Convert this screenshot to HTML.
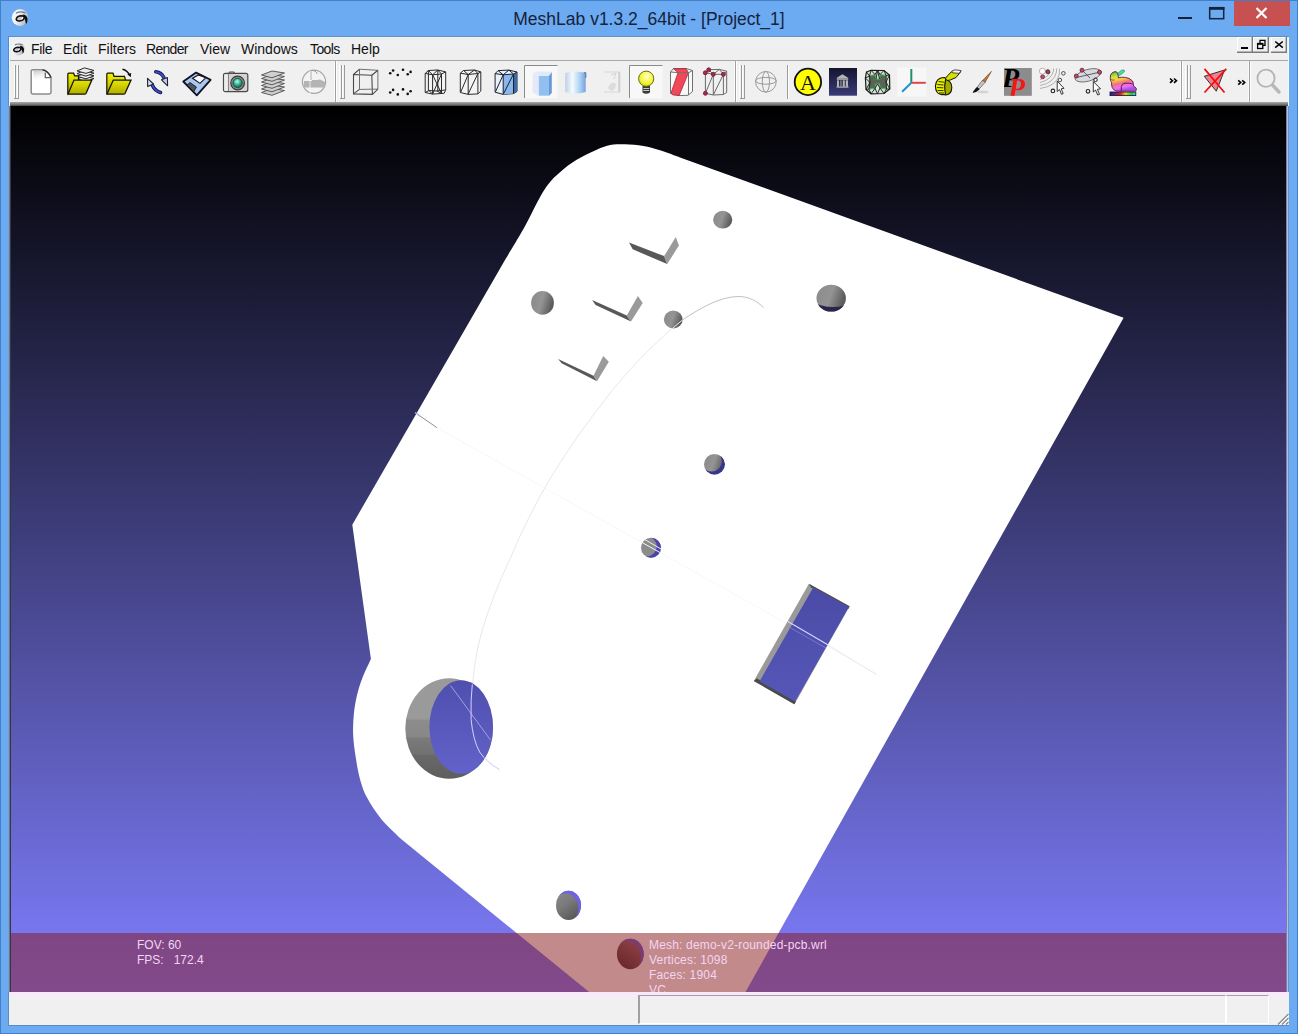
<!DOCTYPE html>
<html><head><meta charset="utf-8">
<style>
*{margin:0;padding:0;box-sizing:border-box}
html,body{width:1298px;height:1034px;overflow:hidden}
body{position:relative;background:#6aa8ef;font-family:"Liberation Sans",sans-serif}
.a{position:absolute}
#frame{left:0;top:0;width:1298px;height:1034px;border:1px solid #4080c8;background:#6caaf2}
#title{left:0;top:9px;width:1298px;text-align:center;font-size:17.5px;color:#15233a;letter-spacing:0px}
#client{left:8px;top:36px;width:1281px;height:990px;background:#f0f0f0;border-top:1px solid #6090c0;border-left:1px solid #5a8ac8;border-bottom:1px solid #5a8ac8}
#menubar{left:9px;top:37px;width:1280px;height:23px;background:linear-gradient(#e8f6fb 0,#eeece6 2px,#f0f0f2 3px,#efefef 100%)}
#menusep{left:9px;top:60px;width:1280px;height:1px;background:#a8a8a8}
#menusep2{left:9px;top:61px;width:1280px;height:1px;background:#fff}
.menu{top:41px;font-size:14px;color:#111}
#tbbot{left:9px;top:102px;width:1280px;height:4px;background:linear-gradient(#a8a8a8,#787878 60%,#404040)}
#canvas{left:11px;top:106px;width:1275px;height:886px;background:linear-gradient(#000 0%,rgb(128,127,255) 100%);overflow:hidden}
#status{left:9px;top:992px;width:1280px;height:33px;background:#f0f0f0}
.vsep{top:61px;width:1px;height:41px;background:#a0a0a0;box-shadow:1px 0 0 #fff,-1px 0 0 #fafafa}
.handle{top:65px;width:6px;height:34px;border-left:1px solid #fff;}
.handle:before{content:"";position:absolute;left:1px;top:0;width:1px;height:33px;background:#9a9a9a}
.handle:after{content:"";position:absolute;left:2px;top:0;width:3px;height:33px;border-left:1px solid #fff;border-right:1px solid #9a9a9a;border-bottom:1px solid #9a9a9a}
.ico{position:absolute;overflow:visible}
.ovt{font-size:12px;color:#f4d4f4;line-height:15px;white-space:pre}
</style></head><body>
<div id="frame" class="a"></div>
<div id="title" class="a">MeshLab v1.3.2_64bit - [Project_1]</div>
<!-- window buttons -->
<div class="a" style="left:1178px;top:17px;width:14px;height:2px;background:#15233a"></div>
<svg class="a" style="left:1205px;top:4px" width="24" height="20" viewBox="1205 4 24 20"><rect x="1209.7" y="7.7" width="14" height="11" fill="none" stroke="#15233a" stroke-width="1.5"/><rect x="1209" y="7" width="15.4" height="2.8" fill="#15233a"/></svg>
<div class="a" style="left:1234px;top:1px;width:56px;height:25px;background:#c75050"></div>
<svg class="a" style="left:1255px;top:7px" width="13" height="12"><path d="M1.5 1 L11.5 11 M11.5 1 L1.5 11" stroke="#fff" stroke-width="2.2"/></svg>

<div id="client" class="a"></div>
<div id="menubar" class="a"></div>
<div id="menusep" class="a"></div>
<div id="menusep2" class="a"></div>
<div class="a menu" style="left:31px;letter-spacing:-0.3px">File</div>
<div class="a menu" style="left:63px">Edit</div>
<div class="a menu" style="left:98px">Filters</div>
<div class="a menu" style="left:146px;letter-spacing:-0.7px">Render</div>
<div class="a menu" style="left:200px">View</div>
<div class="a menu" style="left:241px">Windows</div>
<div class="a menu" style="left:310px;letter-spacing:-0.6px">Tools</div>
<div class="a menu" style="left:351px">Help</div>


<!-- toolbar separators & handles -->
<div class="a" style="left:9px;top:61px;width:1280px;height:41px;background:#f0f0f0"></div>
<div class="a vsep" style="left:335px"></div>
<div class="a vsep" style="left:735px"></div>
<div class="a vsep" style="left:1181px"></div>
<div class="a vsep" style="left:1249px"></div>
<svg class="a" style="left:0;top:0" width="1298" height="110" viewBox="0 0 1298 110">
<defs>
 <linearGradient id="gFold" x1="0" y1="0" x2="1" y2="1"><stop offset="0" stop-color="#fff"/><stop offset="0.45" stop-color="#d8d8d8"/><stop offset="1" stop-color="#fff"/></linearGradient>
 <linearGradient id="gYel" x1="0" y1="0" x2="0" y2="1"><stop offset="0" stop-color="#f4f400"/><stop offset="1" stop-color="#a8a400"/></linearGradient>
 <linearGradient id="gYel2" x1="0" y1="0" x2="0" y2="1"><stop offset="0" stop-color="#e6e600"/><stop offset="1" stop-color="#b0ac00"/></linearGradient>
 <linearGradient id="gNavy" x1="0" y1="0" x2="0" y2="1"><stop offset="0" stop-color="#151530"/><stop offset="1" stop-color="#3a3a78"/></linearGradient>
 <linearGradient id="gCyl" x1="0" y1="0" x2="1" y2="0"><stop offset="0" stop-color="#b8cce8"/><stop offset="0.35" stop-color="#f4fcff"/><stop offset="0.7" stop-color="#a8d0f8"/><stop offset="1" stop-color="#6898d8"/></linearGradient>
 <linearGradient id="gRain" x1="0" y1="0" x2="1" y2="0"><stop offset="0" stop-color="#2020a0"/><stop offset="0.4" stop-color="#d02020"/><stop offset="0.6" stop-color="#e0d020"/><stop offset="0.85" stop-color="#20c040"/><stop offset="1" stop-color="#40e0c0"/></linearGradient>
 <linearGradient id="gBun" x1="0" y1="0" x2="0.3" y2="1"><stop offset="0" stop-color="#30c030"/><stop offset="0.3" stop-color="#d8e040"/><stop offset="0.45" stop-color="#f8d040"/><stop offset="0.65" stop-color="#f07080"/><stop offset="0.85" stop-color="#f070f0"/><stop offset="1" stop-color="#b050e8"/></linearGradient>
 <radialGradient id="gLens" cx="0.45" cy="0.35" r="0.7"><stop offset="0" stop-color="#b0fff0"/><stop offset="0.6" stop-color="#20a080"/><stop offset="1" stop-color="#106050"/></radialGradient>
 <radialGradient id="gBulb" cx="0.55" cy="0.35" r="0.7"><stop offset="0" stop-color="#ffffd0"/><stop offset="0.5" stop-color="#f8f850"/><stop offset="1" stop-color="#e0e000"/></radialGradient>
</defs>
<!-- handles -->
<g stroke-width="1" fill="none">
 <path d="M14.5 65 V98.5 M17.5 65 V98.5" stroke="#fff"/><path d="M15.5 65 V98.5 M18.5 65 V98.5 M14 98.5 H19" stroke="#9a9a9a"/>
 <path d="M339.5 65 V98.5 M342.5 65 V98.5" stroke="#fff"/><path d="M341.5 65 V98.5 M344.5 65 V98.5 M340 98.5 H345" stroke="#9a9a9a"/>
 <path d="M739.5 65 V98.5 M742.5 65 V98.5" stroke="#fff"/><path d="M741.5 65 V98.5 M744.5 65 V98.5 M740 98.5 H745" stroke="#9a9a9a"/>
 <path d="M1185.5 65 V98.5 M1188.5 65 V98.5" stroke="#fff"/><path d="M1187.5 65 V98.5 M1190.5 65 V98.5 M1186 98.5 H1191" stroke="#9a9a9a"/>
 <path d="M787.5 65 V99" stroke="#9a9a9a"/><path d="M788.5 65 V99" stroke="#fff"/>
</g>
<!-- 1 new doc -->
<path d="M31.2 71.5 Q31.2 69.8 33 69.8 H42.5 Q48 70.5 51 77.5 V92.2 Q51 93.9 49.3 93.9 H33 Q31.2 93.9 31.2 92.2 Z" fill="#fff" stroke="#8c8c8c" stroke-width="1.5"/>
<path d="M32.5 71 H42 Q44 71 45 73 V77.5 H50" fill="none" stroke="none"/>
<linearGradient id="gDocSh" x1="0" y1="0" x2="0.3" y2="1"><stop offset="0" stop-color="#b8b8b8"/><stop offset="1" stop-color="#fff" stop-opacity="0"/></linearGradient><path d="M33.5 70.8 H42.5 Q44.5 71.5 45.3 73 V78 H50 L50.3 80 L33.5 82 Z" fill="url(#gDocSh)" opacity="0.8"/>
<path d="M42.5 69.8 Q48 70.5 51 77.5" fill="none" stroke="#303030" stroke-width="1.3"/>
<path d="M45.3 72.5 V77.6 H50.5" fill="none" stroke="#606060" stroke-width="1.2"/>
<!-- 2 open project: layers + folder -->
<g stroke="#2a2a2a" stroke-width="1" fill="#ececec" stroke-linejoin="round">
 <path d="M77 79 L84.5 76 L94 78.6 L86 81.5 Z"/>
 <path d="M77 76.3 L84.5 73.3 L94 75.9 L86 78.8 Z"/>
 <path d="M77 73.6 L84.5 70.6 L94 73.2 L86 76.1 Z"/>
 <path d="M77 70.9 L84.5 67.9 L94 70.5 L86 73.4 Z"/>
</g>
<path d="M67.8 74.2 Q67.8 73.2 68.8 73.2 H73.6 L74.6 75.8 H78.5 V80 L68 94 Q67.8 93 67.8 92Z" fill="url(#gYel)" stroke="#151500" stroke-width="1.2"/>
<path d="M74 80.1 H91.8 L86 93.5 Q85.6 94.2 84.5 94.2 H68.5 Q67.8 94.2 68.2 93.4Z" fill="url(#gYel2)" stroke="#151500" stroke-width="1.3"/>
<!-- 3 open mesh -->
<path d="M106.8 74.2 Q106.8 73.2 107.8 73.2 H113 L114 76.3 H124.5 L125.5 80 L107 94 Q106.8 93 106.8 92Z" fill="url(#gYel)" stroke="#151500" stroke-width="1.2"/>
<path d="M113.3 80.1 H131 L125 93.5 Q124.6 94.2 123.5 94.2 H107.5 Q106.8 94.2 107.2 93.4Z" fill="url(#gYel2)" stroke="#151500" stroke-width="1.3"/>
<path d="M122.5 69.3 Q127.5 70.5 129.5 75" fill="none" stroke="#101010" stroke-width="1.4"/>
<path d="M127.3 74.3 L130.8 77.2 L131.2 73 Z" fill="#101010"/>
<!-- 4 reload -->
<path d="M155.8 71.8 Q161.5 72.5 163.8 77.5" fill="none" stroke="#101850" stroke-width="3.6" stroke-linecap="round"/>
<path d="M155.8 71.8 Q161.5 72.5 163.8 77.5" fill="none" stroke="#3a50d0" stroke-width="1.8" stroke-linecap="round"/>
<path d="M161.5 79.8 L167.4 77.6 L167.6 85.8 Z" fill="#c8c8f4" stroke="#202030" stroke-width="1.1" stroke-linejoin="round"/>
<path d="M152.5 85.5 Q155 91 160.5 92.5" fill="none" stroke="#101850" stroke-width="3.6" stroke-linecap="round"/>
<path d="M152.5 85.5 Q155 91 160.5 92.5" fill="none" stroke="#3a50d0" stroke-width="1.8" stroke-linecap="round"/>
<path d="M147.5 78.3 L153.5 84 L147.7 86.6 Z" fill="#d0e0f0" stroke="#202030" stroke-width="1.1" stroke-linejoin="round"/>
<!-- 5 floppy -->
<path d="M196.1 72.6 L210.6 79.8 L196.8 95.3 L183.3 81.5 Z" fill="#a8c8f0" stroke="#101020" stroke-width="1.8" stroke-linejoin="round"/>
<path d="M198.4 74.9 L205.7 77.8 L200 83.4 L192.5 78.2 Z" fill="#f8f8f8" stroke="#101020" stroke-width="1.1"/>
<path d="M189.9 82.4 L196.4 87 L193.8 91.8 L187 85 Z" fill="#505058" stroke="#101020" stroke-width="0.8"/>
<!-- 6 camera -->
<path d="M229.2 73.3 V72 H234.2 V73.3" fill="#d8d8d8" stroke="#505050" stroke-width="1"/>
<rect x="223.5" y="73.3" width="24.3" height="18.3" rx="2" fill="#d4d4d4" stroke="#4a4a4a" stroke-width="1.2"/>
<path d="M228.3 73.8 V91" stroke="#707070" stroke-width="1"/>
<rect x="224.3" y="74.5" width="3.6" height="16.4" fill="#ececec"/>
<circle cx="237.6" cy="83" r="6.8" fill="#8a8a8a" stroke="#3a3a3a" stroke-width="1.2"/>
<circle cx="237.6" cy="83" r="4.6" fill="url(#gLens)" stroke="#104838" stroke-width="0.8"/>
<!-- 7 layers -->
<g stroke="#5a5a5a" stroke-width="1" fill="#cfcfcf">
 <path d="M261.5 92.5 L272 88.5 L284.5 90.5 L272 95.3 Z"/>
 <path d="M261.5 89 L272 85 L284.5 87 L272 91.8 Z"/>
 <path d="M261.5 85.5 L272 81.5 L284.5 83.5 L272 88.3 Z"/>
 <path d="M261.5 82 L272 78 L284.5 80 L272 84.8 Z"/>
 <path d="M261.5 78.5 L272 74.5 L284.5 76.5 L272 81.3 Z"/>
 <path d="M261.5 75 L272 71 L284.5 73 L272 77.8 Z"/>
</g>
<!-- 8 globe faded -->
<g opacity="0.75">
<circle cx="314" cy="81.8" r="11.6" fill="#f4f4f4" stroke="#8c8c8c" stroke-width="1.2"/>
<path d="M304 81 H312 V80 H317 L320 79.5 L325 82 V87.5 H303.5Z" fill="#a0a0a0"/>
<path d="M310.5 71 Q313 70 315 71 Q317.5 73 317 74" fill="none" stroke="#808080" stroke-width="1"/>
<path d="M310 71 V95" stroke="#fff" stroke-width="1" opacity="0.8"/>
<path d="M311 72 V80" stroke="#999" stroke-width="1"/>
</g>
<!-- 9 bbox cube -->
<g fill="none" stroke="#4a4a4a" stroke-width="1.1">
 <path d="M353.5 74.5 L371.8 75.3 L372.4 94.4 L353.5 93.9 Z"/>
 <path d="M359.5 69.2 L377.9 70.3 L377.9 89.1 L359.5 89.4 Z" stroke="#707070" stroke-width="1"/>
 <path d="M353.5 74.5 L359.5 69.2 M371.8 75.3 L377.9 70.3 M372.4 94.4 L377.9 89.1 M353.5 93.9 L359.5 89.4"/>
</g>
<!-- 10 points -->
<g fill="#111">
 <circle cx="390.2" cy="73.2" r="1.3"/><circle cx="393.1" cy="70.5" r="1.3"/><circle cx="397.8" cy="75" r="1.3"/><circle cx="403" cy="69.8" r="1.3"/><circle cx="407.7" cy="74.2" r="1.3"/><circle cx="410.6" cy="71.9" r="1.3"/>
 <circle cx="390.2" cy="92.5" r="1.3"/><circle cx="393.1" cy="89.9" r="1.3"/><circle cx="397.8" cy="94.4" r="1.3"/><circle cx="403" cy="89.4" r="1.3"/><circle cx="407.7" cy="93.9" r="1.3"/><circle cx="410.6" cy="91.2" r="1.3"/>
</g>
<!-- 11 wireframe prism -->
<g fill="#f4f4f4" stroke="#2a2a2a" stroke-width="1">
 <path d="M425.2 73.4 L428.4 70.5 L437.8 70 L445.7 71.9 V90.2 L444.1 93.3 L432.6 94.1 L425.2 92.5 Z"/>
 <path d="M425.2 73.4 L432.6 74.8 L441.5 74 L445.7 71.9 M432.6 74.8 V94.1 M441.5 74 V93.5 M428.4 70.5 L432.6 74.8 L437.8 70 L441.5 74 M432.6 74.8 L441.5 93.5 M441.5 74 L432.6 94.1 M429 90.5 L437 91 L445 90 M425.2 92.5 L429 90.5 L432.6 94.1 M437 91 L441.5 93.5 M428.4 70.5 V90.5 M437.8 70 V91" fill="none"/>
</g>
<!-- 12 flat lines prism -->
<g fill="#f4f4f4" stroke="#2a2a2a" stroke-width="1">
 <path d="M460.3 73.2 L463.5 70.5 L474.5 70 L480.8 71.9 V91 L477.9 93.9 L468.2 94.4 L460.3 92.5 Z"/>
 <path d="M460.3 73.2 L468.2 74.5 L477.9 73.5 L480.8 71.9 M468.2 74.5 V94.4 M477.9 73.5 V93.9 M463.5 70.5 L468.2 74.5 L474.5 70 L477.9 73.5 M468.2 74.5 L460.8 92 M477.9 73.5 L468.2 94" fill="none"/>
</g>
<!-- 13 flat+lines blue -->
<path d="M495.1 73.6 L498.1 70.6 L508.9 70.1 L517 72 V91.4 L513.5 93.6 L503.2 94.4 L495.1 92.2 Z" fill="#e8f0f8" stroke="#1a2030" stroke-width="1"/>
<path d="M503.2 74.8 L513.5 74 V93.6 L503.2 94.4 Z" fill="#88b8ec"/>
<path d="M513.5 74 L517 72 V91.4 L513.5 93.6 Z" fill="#3a6aa8"/>
<path d="M495.1 73.6 L503.2 74.8 L513.5 74 L517 72 M503.2 74.8 V94.4 M513.5 74 V93.6 M498.1 70.6 L503.2 74.8 L508.9 70.1 L513.5 74 M503.2 74.8 L495.6 91.5 M513.5 74 L503.5 93.8" fill="none" stroke="#1a2030" stroke-width="1"/>
<!-- pressed buttons -->
<g>
 <path d="M524.5 98 V65.5 H557.5" fill="none" stroke="#8a8a8a" stroke-width="1"/>
 <rect x="525" y="66" width="32.5" height="32" fill="#f8f8f8"/>
 <path d="M629.5 98 V65.5 H662.5" fill="none" stroke="#8a8a8a" stroke-width="1"/>
 <rect x="630" y="66" width="32.5" height="32" fill="#f8f8f8"/>
</g>
<!-- 14 flat box -->
<path d="M532.6 73 L538.8 76 V95.7 L532.6 92.5 Z" fill="#e0e4f8" opacity="0.8"/>
<path d="M533 72 L540 71.5 L551.8 71.7 L549 76 L538.8 76Z" fill="#d8e8f8" opacity="0.8"/>
<path d="M538.8 76 H549 V95.7 H538.8 Z" fill="#90c0f0"/>
<path d="M549 76 L551.8 72 V93 L549 95.7 Z" fill="#6898d8"/>
<!-- 15 smooth cylinder -->
<path d="M565.2 73 Q575 70 585.7 73 V92 Q575 95 565.2 92 Z" fill="url(#gCyl)" opacity="0.9"/>
<path d="M583.8 72.5 L585.7 73 V78" fill="none" stroke="#5a7aa0" stroke-width="1.2"/>
<!-- 16 texture faded -->
<g opacity="0.35">
 <path d="M604 72 H620 V92 H604" fill="none" stroke="#b0b0b0" stroke-width="1"/>
 <path d="M619 72 V92" stroke="#909090" stroke-width="1.5"/>
 <path d="M608 88 Q611 80 616 84 Q616 90 611 91 Z" fill="#b8b8b8"/>
 <path d="M611 75 L616 73 L614 79" fill="none" stroke="#a0a0a0"/>
</g>
<!-- 17 bulb -->
<path d="M642.5 86 H650 V92.5 Q646.2 95 642.5 92.5 Z" fill="#3a3a3a"/>
<path d="M643.3 88.5 H649.2 M643.3 90.5 H649.2" stroke="#c8c8c8" stroke-width="1"/>
<circle cx="646.2" cy="78.7" r="7.6" fill="url(#gBulb)" stroke="#6a6a10" stroke-width="1"/>
<!-- 18 red face prism -->
<path d="M670.5 72 L673.5 68.5 L686 68.5 L692.5 70.5 V91.5 L688 95.3 L679 95.6 L670.5 93.5 Z" fill="#f8f8f8" stroke="#707070" stroke-width="1"/>
<path d="M673.5 68.8 L686 68.6 L688.5 72.8 L679.2 95.4 L673 95 L671 93 L678 72.6 Z" fill="#f04858" stroke="#a02030" stroke-width="0.7"/>
<path d="M670.5 72 L678 72.6 L688.5 72.8 L692.5 70.5 M688.5 72.8 V95" fill="none" stroke="#707070" stroke-width="1"/>
<!-- 19 vertex prism -->
<g fill="none" stroke="#6a6a6a" stroke-width="1">
 <path d="M705.4 72.8 V93.3 L713.3 95 L723.4 94.5 L726.7 92.5 V71.2 L719.3 69.4 L708.7 69.7 Z"/>
 <path d="M705.4 72.8 L713.3 74.3 L723.4 74.3 L726.7 71.2 M713.3 74.3 V95 M723.4 74.3 V94.5 M713.3 74.3 L705.4 93.3 M723.4 74.3 L713.3 95 M708.7 69.7 L713.3 74.3 L719.3 69.4 L723.4 74.3"/>
</g>
<g fill="#a82848" stroke="#701830" stroke-width="0.8">
 <circle cx="708.7" cy="69.8" r="2"/><circle cx="705.3" cy="72.8" r="2"/><circle cx="713.3" cy="74.3" r="2"/><circle cx="723.4" cy="74.3" r="2"/><circle cx="705.4" cy="93.3" r="2"/>
</g>
<!-- 20 globe wire -->
<g fill="none" stroke="#9a9a9a" stroke-width="1">
 <circle cx="765.9" cy="81.8" r="10.3"/>
 <ellipse cx="765.9" cy="80.8" rx="10.3" ry="3.4"/>
 <ellipse cx="765.9" cy="81.8" rx="3.6" ry="10.3"/>
</g>
<!-- 21 A circle -->
<circle cx="807.9" cy="81.9" r="13.2" fill="#ffff00" stroke="#111" stroke-width="1.8"/>
<text x="808" y="89.8" font-family="Liberation Serif" font-size="22" text-anchor="middle" fill="#111">A</text>
<!-- 22 dark image -->
<rect x="829" y="68" width="28" height="27.7" fill="url(#gNavy)"/>
<g fill="#b4b4b4">
 <path d="M836.5 78 L842.4 74.2 L848.4 78 Z"/>
 <rect x="836.8" y="78.2" width="11.4" height="1.6"/>
 <rect x="837" y="80.3" width="2" height="6.5"/><rect x="840" y="80.3" width="1.8" height="6.5" fill="#707070"/><rect x="842.8" y="80.3" width="2" height="6.5"/><rect x="845.8" y="80.3" width="2.2" height="6.5"/>
 <rect x="836.5" y="86.5" width="12" height="1.2"/>
</g>
<!-- 23 mesh icon -->
<path d="M866.5 72 L871 70.3 L884 70.5 L889.5 75 L889.8 89 L884 93.5 L871 93.8 L866 89.5 L865.4 78Z" fill="#d8e0d8" stroke="#1a1a1a" stroke-width="1.2"/>
<path d="M869.5 76 L875 74.5 L876 79 L879.5 79 L880 74.5 L886 75.5 L886.5 89 L880 88 L879.5 84 L876 84 L875 88.5 L869 89 Z" fill="#5a625a" stroke="#40c050" stroke-width="1.1"/>
<path d="M871 70.3 L869.5 76 L866.5 72 M871 70.3 L875 74.5 L877.5 70.4 L880 74.5 L884 70.5 L886 75.5 L889.5 75 M865.4 78 L869.5 76 M865.4 78 L870 82.5 L866 89.5 M870 82.5 L869 89 L871 93.8 L875 88.5 L877.5 93.7 L880 88 L884 93.5 L886.5 89 L889.8 89 M889.5 75 L886 82 L889.8 89 M866 89.5 L869 89 M869.5 76 L870 82.5 M886.5 89 L886 82 L886 75.5 M877.5 70.4 L876 79 M877.5 70.4 L879.5 79 M875 88.5 L877.5 84 L880 88" fill="none" stroke="#1a1a1a" stroke-width="0.9"/>
<!-- 24 axes -->
<rect x="897.2" y="67.4" width="29.2" height="29" fill="#fafafa" opacity="0.7"/>
<path d="M911.3 69 V82.8" stroke="#209070" stroke-width="2"/>
<path d="M911.3 82.8 H925.8" stroke="#e04848" stroke-width="2"/>
<path d="M911.3 82.8 L902.1 91.7" stroke="#2090d0" stroke-width="2"/>
<!-- 25 tape -->
<path d="M944.5 79.5 Q947 76 951.4 71.8 L960.8 71.6 L956 77.5 Q950 80.5 946 81 Z" fill="#d8e000" stroke="#141400" stroke-width="1"/>
<path d="M951.8 71 L955 69.8 L961.2 70.6 L959 73.4 L952.5 72.8 Z" fill="#f4f4f4" stroke="#404040" stroke-width="0.9"/>
<path d="M945.5 79.5 Q951.8 81 951.8 87.5 Q951.6 94.5 946 95 Q944 95 943 94 Z" fill="#a4ac00" stroke="#141400" stroke-width="1.1"/>
<path d="M944.6 77.5 Q936 77.5 935.4 86 Q935.6 93.5 941 94.5 Q944 95 945.5 94 Q943.8 86 945.8 79 Z" fill="#e6f000" stroke="#141400" stroke-width="1.1"/>
<path d="M938.5 81.5 L944 82.2 M937.3 84.5 L943.6 85 M937 87.5 L943.4 87.8 M937.6 90.5 L943.6 90.6 M939 93 L944 93" stroke="#202000" stroke-width="0.9"/>
<!-- 26 brush -->
<ellipse cx="983" cy="92" rx="6" ry="1.4" fill="#c0c0c0" opacity="0.6"/>
<path d="M991.4 71.4 L985 82.5 L982 81 Z" fill="#c07830" stroke="#6a4010" stroke-width="0.6"/>
<path d="M985.5 82 L979 89 L977 87.5 L982.2 80.6 Z" fill="#c8c8c8" stroke="#404040" stroke-width="0.6"/>
<path d="M977 87 Q979 88 979.6 89.6 Q976 93 972.5 92.6 Q974.5 89 977 87Z" fill="#111"/>
<!-- 27 PP -->
<rect x="1004" y="68" width="27.8" height="27.8" fill="#8c8c8c"/>
<clipPath id="cPP"><rect x="1004" y="68" width="27.8" height="27.8"/></clipPath>
<g clip-path="url(#cPP)">
<text x="1002" y="86.8" font-family="Liberation Serif" font-style="italic" font-weight="bold" font-size="28" fill="#000">P</text>
<text x="1008.5" y="96.5" font-family="Liberation Serif" font-style="italic" font-weight="bold" font-size="27" fill="#f01818">P</text>
</g>
<!-- 28 point picking -->
<g fill="none" stroke="#a8a8a8" stroke-width="0.9">
 <path d="M1059.4 68.5 V74 Q1057 86 1040 88.5"/>
 <path d="M1056.5 68.5 V72 Q1054 83 1040 85.5"/>
 <path d="M1053.5 68.5 V71 Q1051 80 1040 82.5"/>
 <path d="M1050.5 72 Q1048 77 1040 79.5"/>
</g>
<circle cx="1042.4" cy="71.2" r="3" fill="#fff" stroke="#a0a0a0" stroke-width="0.8"/>
<circle cx="1047.8" cy="71.7" r="2" fill="#a04050" stroke="#402020" stroke-width="0.8"/>
<circle cx="1042.6" cy="76.8" r="2" fill="#c84868" stroke="#602030" stroke-width="0.6"/>
<circle cx="1063.4" cy="73.3" r="1.8" fill="none" stroke="#404040" stroke-width="0.9"/>
<circle cx="1059.9" cy="80" r="1.8" fill="none" stroke="#404040" stroke-width="0.9"/>
<circle cx="1052.9" cy="90.9" r="1.8" fill="none" stroke="#202020" stroke-width="1.1"/>
<path d="M1057.2 81 V91.5 L1059.5 89.5 L1061.5 94.3 L1063.2 93.6 L1061.2 88.8 L1064 88.3 Z" fill="#fff" stroke="#202020" stroke-width="0.9" stroke-linejoin="round"/>
<!-- 29 ellipse picking -->
<ellipse cx="1088" cy="75.3" rx="13.5" ry="5.8" transform="rotate(-16 1088 75.3)" fill="#d8d8e0" stroke="#707070" stroke-width="0.9"/>
<path d="M1076.5 77.5 L1099.5 72.2 M1082 70.2 L1090 78" stroke="#404040" stroke-width="0.8"/>
<circle cx="1082" cy="70.2" r="2" fill="#c04868" stroke="#602030" stroke-width="0.8"/>
<circle cx="1076.3" cy="76" r="2" fill="#c04868" stroke="#602030" stroke-width="0.8"/>
<circle cx="1099.5" cy="72.2" r="2" fill="#c04868" stroke="#602030" stroke-width="0.8"/>
<circle cx="1095.5" cy="79.8" r="1.8" fill="none" stroke="#202020" stroke-width="1"/>
<circle cx="1088" cy="91.3" r="1.8" fill="none" stroke="#202020" stroke-width="1.1"/>
<path d="M1093.3 81.5 V92 L1095.5 90 L1097.7 95 L1099.5 94.3 L1097.4 89.3 L1100.5 88.8 Z" fill="#fff" stroke="#202020" stroke-width="0.9" stroke-linejoin="round"/>
<!-- 30 bunny -->
<rect x="1110" y="92" width="25.8" height="3.6" fill="url(#gRain)" stroke="#101040" stroke-width="0.8"/>
<path d="M1117 74.5 Q1119 71.5 1122 70 Q1124.5 69.5 1124.8 71 Q1123.5 73 1119.5 75.5 Z" fill="#40e0a0" stroke="#208050" stroke-width="0.6"/>
<path d="M1110.5 75 Q1112 72 1115 71.6 Q1117.5 71.5 1118 74.5 L1118.3 77.8 Q1121 77 1124.2 77.3 Q1129.7 77.6 1132.5 81 Q1133.8 83.5 1133.5 86 Q1135.5 87 1136.3 88.5 Q1136.4 90.5 1135.5 91.2 L1116.5 91.2 Q1113 90 1112.2 87.5 Q1111.2 84.5 1111.6 82.4 Q1110.2 80.5 1110.3 78.5 Z" fill="url(#gBun)" stroke="#5a1a4a" stroke-width="0.9"/>
<path d="M1121.3 91 V86.5 Q1122 83.5 1125 83.2 Q1130 83 1132.8 84" fill="none" stroke="#4a1060" stroke-width="0.9"/>
<path d="M1111 79.6 Q1113 80.5 1114.5 80" fill="none" stroke="#304020" stroke-width="0.7"/>
<!-- 31 chevrons -->
<path d="M1170 78.5 L1172.5 80.7 L1170 82.9 M1174 78.5 L1176.5 80.7 L1174 82.9" fill="none" stroke="#000" stroke-width="1.6"/>
<!-- 32 red X -->
<path d="M1204.3 76.3 L1224.5 70 L1216.3 91.2 Z" fill="#f08090" stroke="#303030" stroke-width="1"/>
<path d="M1204.5 68.8 L1224.5 92.5 M1226.3 68.8 L1204.5 92.5" stroke="#f01010" stroke-width="1.8"/>
<!-- 33 chevrons -->
<path d="M1238.2 80.3 L1240.7 82.5 L1238.2 84.7 M1242.2 80.3 L1244.7 82.5 L1242.2 84.7" fill="none" stroke="#000" stroke-width="1.6"/>
<!-- 34 magnifier -->
<circle cx="1266" cy="78.2" r="8.6" fill="none" stroke="#b4b4b4" stroke-width="1.8"/>
<path d="M1272.5 85 L1279 92" stroke="#b8b8b8" stroke-width="3.4" stroke-linecap="round"/>
<!-- MDI buttons -->
</svg>


<svg class="a" style="left:0;top:0" width="40" height="60" viewBox="0 0 40 60">
 <defs><linearGradient id="gBall" x1="0" y1="0" x2="1" y2="0.4"><stop offset="0" stop-color="#e8fbff"/><stop offset="0.45" stop-color="#f4f4f6"/><stop offset="1" stop-color="#b8bcc0"/></linearGradient></defs>
 <circle cx="20" cy="17.6" r="8.3" fill="url(#gBall)"/>
 <path d="M16 13.2 Q20.5 10.8 25.5 13" fill="none" stroke="#50585e" stroke-width="1.3" opacity="0.8"/>
 <path d="M16.2 19.2 Q17 15.8 21.5 15.8 Q24 15.9 24.3 17.6 Q23.8 20.5 19.5 21 Q16.5 21.2 16.2 19.2 Z" fill="#c8c8c8" stroke="#0c0c0c" stroke-width="1.5"/>
 <path d="M21.2 19.3 Q22.6 18.8 22.8 17.4" fill="none" stroke="#fff" stroke-width="1.2"/>
 <path d="M22.5 14.5 Q26.5 14.5 27.6 18.5 Q27.8 22.5 26 24.2 Q25.6 20 24 17.8 Q23.5 16 22.5 14.5 Z" fill="#0a1218"/>
 <circle cx="18" cy="48.8" r="6.7" fill="url(#gBall)"/>
 <path d="M14.8 45 Q18.5 43 22.5 45" fill="none" stroke="#50585e" stroke-width="1.1" opacity="0.8"/>
 <path d="M13.6 50.2 Q14.3 47.2 18.3 47.2 Q20.6 47.3 20.9 48.8 Q20.4 51.3 16.8 51.8 Q14 52 13.6 50.2 Z" fill="#c8c8c8" stroke="#0c0c0c" stroke-width="1.4"/>
 <path d="M18 50.3 Q19.3 49.9 19.5 48.7" fill="none" stroke="#fff" stroke-width="1"/>
 <path d="M19.8 45.8 Q23 45.8 24 49 Q24.2 52.3 22.8 53.8 Q22.4 50.5 21 48.8 Q20.6 47.2 19.8 45.8 Z" fill="#0a0a0a"/>
</svg>
<!-- MDI buttons -->
<svg class="a" style="left:1230px;top:34px" width="62" height="24" viewBox="1230 34 62 24">
 <g fill="none" stroke-width="1">
  <path d="M1237.5 52 V37.5 H1252" stroke="#fff"/><path d="M1237 52.2 H1252.3 V37" stroke="#7a7a7a" stroke-width="1.4"/>
  <path d="M1253.5 52 V37.5 H1268" stroke="#fff"/><path d="M1253 52.2 H1268.3 V37" stroke="#7a7a7a" stroke-width="1.4"/>
  <path d="M1271.5 52 V37.5 H1286" stroke="#fff"/><path d="M1271 52.2 H1286.3 V37" stroke="#7a7a7a" stroke-width="1.4"/>
 </g>
 <rect x="1241" y="47" width="7" height="2" fill="#000"/>
 <path d="M1260 43 V40.3 H1265 V45.3 H1263" fill="none" stroke="#000" stroke-width="1.3"/>
 <rect x="1257.6" y="43.5" width="5.2" height="5" fill="none" stroke="#000" stroke-width="1.3"/>
 <rect x="1257" y="43" width="6" height="1.8" fill="#000"/>
 <path d="M1275.2 41.5 L1282.8 47.6 M1282.8 41.5 L1275.2 47.6" stroke="#000" stroke-width="1.6"/>
</svg>

<div id="tbbot" class="a"></div>
<div class="a" style="left:9px;top:37px;width:1px;height:69px;background:#e8fcff"></div>
<div class="a" style="left:9px;top:992px;width:1px;height:32px;background:#f0fbff"></div>
<div class="a" style="left:1288px;top:37px;width:1px;height:69px;background:#e8fcff"></div>

<div id="canvas" class="a"></div>
<div class="a" style="left:8px;top:106px;width:1px;height:886px;background:#7a9fd0"></div>
<div class="a" style="left:9px;top:106px;width:1px;height:886px;background:#6a7890"></div>
<div class="a" style="left:10px;top:106px;width:1px;height:886px;background:#303848"></div>
<div class="a" style="left:1286px;top:106px;width:1px;height:886px;background:#7a80a8"></div>
<div class="a" style="left:1287px;top:106px;width:1px;height:886px;background:#b0c0e8"></div>
<div class="a" style="left:1288px;top:106px;width:1px;height:886px;background:#6a90c8"></div>


<svg class="a" style="left:0;top:0" width="1298" height="1034" viewBox="0 0 1298 1034">
<defs>
 <clipPath id="cCan"><rect x="11" y="106" width="1275" height="886"/></clipPath>
 <linearGradient id="gBg" gradientUnits="userSpaceOnUse" x1="0" y1="106" x2="0" y2="992"><stop offset="0" stop-color="#000"/><stop offset="1" stop-color="rgb(128,127,255)"/></linearGradient>
 <linearGradient id="gWall" x1="0" y1="0" x2="0" y2="1"><stop offset="0" stop-color="#9a9a9a"/><stop offset="0.4" stop-color="#9a9a9a"/><stop offset="0.42" stop-color="#8c8c8c"/><stop offset="0.58" stop-color="#888"/><stop offset="0.6" stop-color="#7a7a7a"/><stop offset="0.75" stop-color="#727272"/><stop offset="0.77" stop-color="#686868"/><stop offset="1" stop-color="#5e5e5e"/></linearGradient>
 <linearGradient id="gHoleBlue" x1="0" y1="0" x2="0" y2="1"><stop offset="0" stop-color="#4f4fae"/><stop offset="1" stop-color="#6262ca"/></linearGradient>
 <linearGradient id="gSlotBlue" x1="0" y1="0" x2="0" y2="1"><stop offset="0" stop-color="#4b4ba6"/><stop offset="1" stop-color="#5656b8"/></linearGradient>
 <linearGradient id="gH1" x1="0" y1="0" x2="1" y2="0.3"><stop offset="0" stop-color="#8a8a8a"/><stop offset="0.55" stop-color="#949494"/><stop offset="1" stop-color="#5c5c5c"/></linearGradient>
 <linearGradient id="gH2" x1="0" y1="0" x2="0.6" y2="1"><stop offset="0" stop-color="#8c8c8c"/><stop offset="0.5" stop-color="#7a7a7a"/><stop offset="1" stop-color="#5a5a5a"/></linearGradient>
 <clipPath id="hD"><ellipse cx="831.2" cy="298.2" rx="14.7" ry="13.4"/></clipPath>
 <clipPath id="hE"><ellipse cx="714.4" cy="464.3" rx="10.4" ry="10.3"/></clipPath>
 <clipPath id="hF"><ellipse cx="651" cy="547.8" rx="10" ry="10"/></clipPath>
 <clipPath id="hG"><ellipse cx="568.5" cy="905.4" rx="12.5" ry="14.6"/></clipPath>
 <clipPath id="hH"><ellipse cx="630.3" cy="954" rx="13.4" ry="15.2"/></clipPath>
</defs>
<g clip-path="url(#cCan)">
 <!-- board -->
 <path d="M506.0 258.3 C508.9 253.4 517.2 240.1 523.7 228.6 C530.2 217.1 538.1 199.0 544.7 189.2 C551.3 179.3 557.0 174.8 563.2 169.5 C569.4 164.2 574.5 161.0 581.7 157.1 C588.9 153.2 599.1 148.2 606.3 146.0 C613.5 143.8 618.6 144.2 624.8 144.2 C631.0 144.2 637.4 145.0 643.3 146.0 C649.2 147.0 653.9 148.3 660.0 150.2 C666.1 152.1 676.7 156.2 680.0 157.4 L1123.6 317.8 L741 1000 L599 1000 L402.3 840.1 C398.8 836.6 387.2 826.2 381.4 819.2 C375.6 812.2 370.9 804.7 367.4 798.3 C363.9 791.9 362.4 787.4 360.5 780.9 C358.6 774.4 357.2 766.6 356.0 759.1 C354.8 751.6 353.6 743.1 353.2 735.7 C352.8 728.3 353.2 721.2 353.8 714.5 C354.4 707.8 355.6 701.3 357.0 695.3 C358.4 689.3 360.0 684.3 362.3 678.3 C364.6 672.3 369.5 662.3 370.9 659.1 L352.3 524.7 Z" fill="#fff"/>
 <!-- L slots -->
 <path d="M629 242.5 L632.7 249.3 L667.2 264.1 L664.1 256.1 Z" fill="#585858"/>
 <path d="M664.1 256.1 L667.2 264.1 L678.9 245.6 L675.8 237 Z" fill="#9a9a9a"/>
 <path d="M592.1 300.1 L595.6 305 L631 321.6 L626.8 315.4 Z" fill="#585858"/>
 <path d="M626.8 315.4 L631 321.6 L642.7 302.9 L637.9 296 Z" fill="#9a9a9a"/>
 <path d="M558.1 359.1 L561.6 363.2 L597 381.2 L593.5 375.7 Z" fill="#585858"/>
 <path d="M593.5 375.7 L597 381.2 L608.8 361.8 L603.2 356 Z" fill="#9a9a9a"/>
 <!-- small holes -->
 <ellipse cx="542.5" cy="302.9" rx="11.4" ry="11.8" fill="url(#gH1)"/>
 <ellipse cx="673.3" cy="319.5" rx="9.4" ry="9" fill="url(#gH1)"/>
 <ellipse cx="722.7" cy="219.7" rx="9.6" ry="8.9" fill="url(#gH1)"/>
 <ellipse cx="831.2" cy="298.2" rx="14.7" ry="13.4" fill="url(#gH1)"/>
 <g clip-path="url(#hD)"><path fill-rule="evenodd" d="M800 270 H860 V330 H800 Z M803 287 A30 20 0 1 0 863 287 A30 20 0 1 0 803 287 Z" fill="#28264c"/></g>
 <ellipse cx="714.4" cy="464.3" rx="10.4" ry="10.3" fill="url(#gH1)"/>
 <g clip-path="url(#hE)"><path fill-rule="evenodd" d="M690 440 H740 V490 H690 Z M701.2 461.3 A10.4 10.3 0 1 0 722 461.3 A10.4 10.3 0 1 0 701.2 461.3 Z" fill="#3a3690"/></g>
 <ellipse cx="651" cy="547.8" rx="10" ry="10" fill="#8c8c8c"/>
 <g clip-path="url(#hF)"><path fill-rule="evenodd" d="M625 520 H680 V575 H625 Z M636.8 546.5 A10 10 0 1 0 656.8 546.5 A10 10 0 1 0 636.8 546.5 Z" fill="#4a42b2"/></g>
 <path d="M643 538.5 L661 549" stroke="#f0f0f0" stroke-width="1"/>
 <ellipse cx="568.5" cy="905.4" rx="12.5" ry="14.6" fill="url(#gH2)"/>
 <g clip-path="url(#hG)"><path fill-rule="evenodd" d="M540 875 H600 V935 H540 Z M553.3 908.2 A12.5 14.6 0 1 0 578.3 908.2 A12.5 14.6 0 1 0 553.3 908.2 Z" fill="#6c62e4"/></g>
 <linearGradient id="gHH" x1="0.8" y1="0" x2="0.2" y2="1"><stop offset="0" stop-color="#a07078"/><stop offset="1" stop-color="#4a3a3e"/></linearGradient><ellipse cx="630.3" cy="954" rx="13.4" ry="15.2" fill="url(#gHH)"/>
 <g clip-path="url(#hH)"><path fill-rule="evenodd" d="M600 930 H660 V990 H600 Z M614.2 956.5 A13.4 15.2 0 1 0 641 956.5 A13.4 15.2 0 1 0 614.2 956.5 Z" fill="#7060d8"/></g>
 <!-- faint lines -->
 <path d="M682.8 319.7 Q645 350 612.9 389.6 Q578 433 550.7 477.6 Q527 518 510 558.9 Q492 597 481.6 632 Q472 668 471.5 705.2 Q471.5 728 477.6 745.9 Q486 762 500 770.2" fill="none" stroke="#f0e4e8" stroke-width="1"/>
 <path d="M682.8 319.7 C702 307 720 297 738 296.5 C749 296.5 757 301 763.6 307.7" fill="none" stroke="#c8bec0" stroke-width="1"/>
 <path d="M437 427.7 L877 674" stroke="#f4f8f9" stroke-width="1"/>
 <path d="M417 414 L437 427.7" stroke="#8a9098" stroke-width="1"/><path d="M415 412.5 L420 416" stroke="#b0b0e0" stroke-width="1.5"/>
 <!-- big hole -->
 <ellipse cx="449.2" cy="728.5" rx="43.9" ry="50.2" fill="url(#gWall)"/>
 <ellipse cx="461.2" cy="727" rx="31.8" ry="46.8" fill="url(#gHoleBlue)"/>
 <path d="M450.6 685.5 L490.5 740" stroke="#a8a8e8" stroke-width="0.9"/>
 <path d="M472.3 684.3 Q470.5 700 471.1 719.4 Q473 740 479.6 752 Q488 764 499 769" fill="none" stroke="#d8d0ff" stroke-width="1"/>
 <!-- rect slot -->
 <path d="M808.9 583.8 L849.6 606.3 L794.4 704.3 L753.8 681 Z" fill="#9a9a9a"/>
 <path d="M808.9 583.8 L849.6 606.3 L848.4 609 L811 587.5 Z" fill="#505050"/>
 <path d="M753.8 681 L794.4 704.3 L796 701 L757 678.5 Z" fill="#4a4a4a"/>
 <path d="M813.2 587.6 L848.9 607 L795.2 701.6 L759.6 681.3 Z" fill="url(#gSlotBlue)"/>
 <path d="M787.9 621.5 L827.8 644.7" stroke="#d8d8ff" stroke-width="1.1"/>
 <path d="M789 627 L826 648" stroke="#8080d0" stroke-width="0.8"/>
 <path d="M828 645 L876.4 674.5" stroke="#e4ecf0" stroke-width="1"/>
 <!-- overlay -->
 <rect x="11" y="933" width="1275" height="59" fill="rgba(133,22,23,0.5)"/>
</g>
</svg>
<div class="a ovt" style="left:137px;top:938px">FOV: 60
FPS:   172.4</div>
<div class="a ovt" style="left:649px;top:938px;height:54px;overflow:hidden;letter-spacing:0.18px">Mesh: demo-v2-rounded-pcb.wrl
Vertices: 1098
Faces: 1904
VC</div>

<div id="status" class="a"></div>
<div class="a" style="left:9px;top:992px;width:1280px;height:3px;background:#fbe6fb"></div>
<div class="a" style="left:638px;top:995px;width:588px;height:29px;border-left:2px solid #a0a0a0;border-top:1px solid #a0a0a0;border-bottom:1px solid #fff;border-right:1px solid #fff"></div>
<div class="a" style="left:1226px;top:995px;width:43px;height:29px;border-left:1px solid #fff;border-top:1px solid #a0a0a0;border-bottom:1px solid #fff;border-right:1px solid #fff"></div>
<svg class="a" style="left:1276px;top:1012px" width="13" height="13" viewBox="0 0 13 13"><path d="M12.5 2 L2 12.5 M12.5 6 L6 12.5 M12.5 10 L10 12.5" stroke="#888" stroke-width="1.3"/><path d="M12.5 3.5 L3.5 12.5 M12.5 7.5 L7.5 12.5" stroke="#fff" stroke-width="1"/></svg>

</body></html>
